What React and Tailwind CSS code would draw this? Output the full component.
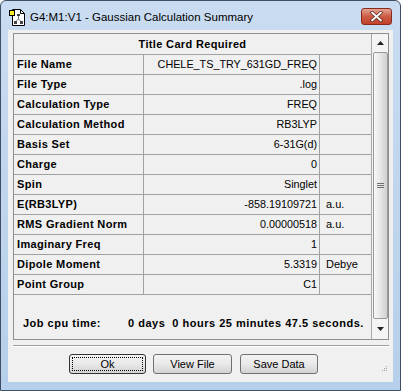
import React from "react";

const rows=[
["File Name","CHELE_TS_TRY_631GD_FREQ",""],
["File Type",".log",""],
["Calculation Type","FREQ",""],
["Calculation Method","RB3LYP",""],
["Basis Set","6-31G(d)",""],
["Charge","0",""],
["Spin","Singlet",""],
["E(RB3LYP)","-858.19109721","a.u."],
["RMS Gradient Norm","0.00000518","a.u."],
["Imaginary Freq","1",""],
["Dipole Moment","5.3319","Debye"],
["Point Group","C1",""]
];

function DocIcon(){
return(
<svg width="17" height="17" viewBox="0 0 17 17">
<path d="M3.5 0.5 H11.5 L15.5 4.5 V16.5 H3.5 Z" fill="#fff" stroke="#000"/>
<path d="M11.5 0.5 V4.5 H15.5" fill="none" stroke="#000"/>
<line x1="9.5" y1="6" x2="9.5" y2="10" stroke="#777"/>
<line x1="9.5" y1="10" x2="6.5" y2="13" stroke="#777"/>
<line x1="9.5" y1="10" x2="12.5" y2="13" stroke="#777"/>
<rect x="8" y="5" width="3" height="2" fill="#444"/>
<rect x="5" y="12" width="3" height="3" fill="#444"/>
<rect x="11" y="12" width="3" height="3" fill="#444"/>
<rect x="0.5" y="1.5" width="5" height="5" fill="#f7ec2a" stroke="#000"/>
</svg>
);
}

function Btn({label,focused,w}){
return(
<button className={"h-[20px] rounded-[3px] border bg-linear-to-b from-[#f3f3f3] via-[#e9e9e9] to-[#d3d3d3] text-[11px] text-black flex items-center justify-center p-[2px] "+w+" "+(focused?"border-[#333333]":"border-[#707070]")}>
<span className={"w-full h-full flex items-center justify-center "+(focused?"border border-dotted border-black":"")}>
{label}
</span>
</button>
);
}

export default function App(){

const bold="font-bold tracking-[0.35px]";

return(

<div className="w-[401px] h-[391px] bg-white" style={{fontFamily:"'Liberation Sans', Arial, sans-serif"}}>

<div className="w-[401px] h-[391px] flex flex-col border border-[#3f4e62] rounded-t-[6px] bg-linear-to-b from-[#c9dcf1] to-[#b6cfea]">

{/* title bar */}
<div className="h-[29px] flex items-start">

<div className="ml-[8px] mt-[8px]">
<DocIcon/>
</div>

<span className="ml-[4px] mt-[8px] text-[11.5px] text-black">
G4:M1:V1 - Gaussian Calculation Summary
</span>

<div className="ml-auto mr-[8px] mt-[7px] w-[31px] h-[17px] rounded-[3px] border border-[#8a2a1e] bg-linear-to-b from-[#e4a493] via-[#cc5b44] to-[#c2412b] flex items-center justify-center">
<svg width="13" height="11" viewBox="0 0 13 11">
<path d="M2 1.5 L11 9.5 M11 1.5 L2 9.5" stroke="#5a2a22" strokeWidth="3.4" strokeLinecap="round"/>
<path d="M2 1.5 L11 9.5 M11 1.5 L2 9.5" stroke="#fff" strokeWidth="1.8" strokeLinecap="round"/>
</svg>
</div>

</div>

{/* client */}
<div className="mx-[7px] h-[352px] bg-[#f0f0f0] flex flex-col text-black">

<div className="mt-[3px] ml-[5px] w-[376px] h-[307px] border border-[#8e8f8f] flex">

<div className="w-[357px] flex flex-col">

<div className={"h-[21px] border-b border-[#a0a0a0] flex items-center justify-center text-[11px] "+bold}>
Title Card Required
</div>

{rows.map((r)=>(

<div key={r[0]} className="h-[20px] border-b border-[#a0a0a0] flex text-[11px]">

<div className={"w-[130px] border-r border-[#a0a0a0] pl-[3px] flex items-center "+bold}>
{r[0]}
</div>

<div className="w-[176px] border-r border-[#a0a0a0] pr-[2px] flex items-center justify-end text-[10.8px]">
{r[1]}
</div>

<div className="w-[51px] pl-[6px] flex items-center">
{r[2]}
</div>

</div>

))}

<div className="flex-1 flex items-end pb-[8px] pl-[9px] text-[11px] whitespace-pre font-bold tracking-[0.5px]">
<span className="w-[105px]">Job cpu time:</span>
<span>0 days  0 hours 25 minutes 47.5 seconds.</span>
</div>

</div>

{/* scrollbar */}
<div className="w-[17px] border-l border-[#a9a9a9] bg-[#f4f4f4] flex flex-col items-center">

<div className="h-[18px] flex items-center justify-center">
<svg width="7" height="4" viewBox="0 0 7 4"><path d="M3.5 0 L7 4 H0 Z" fill="#222"/></svg>
</div>

<div className="w-[15px] h-[267px] rounded-[2px] border border-[#9a9a9a] bg-linear-to-r from-[#f7f7f7] via-[#e6e6e6] to-[#d0d0d0] flex flex-col items-center justify-center gap-[1px]">
<div className="w-[7px] h-[1px] bg-[#6f6f6f]"/>
<div className="w-[7px] h-[1px] bg-[#6f6f6f]"/>
<div className="w-[7px] h-[1px] bg-[#6f6f6f]"/>
</div>

<div className="flex-1 flex items-center justify-center">
<svg width="7" height="4" viewBox="0 0 7 4"><path d="M0 0 H7 L3.5 4 Z" fill="#222"/></svg>
</div>

</div>

</div>

<div className="mt-[5px] ml-[5px] w-[376px] h-[2px] border-t border-[#a0a0a0] border-b border-b-white"/>

<div className="mt-[7px] flex items-start">

<div className="ml-[61px] flex gap-[7px]">
<Btn label="Ok" focused w="w-[77px]"/>
<Btn label="View File" w="w-[79px]"/>
<div className="ml-[1px]">
<Btn label="Save Data" w="w-[78px]"/>
</div>
</div>

<div className="ml-auto mr-[6px] mt-[12px] grid grid-cols-3 gap-[1px]">
<div className="w-[1px] h-[1px]"/>
<div className="w-[1px] h-[1px]"/>
<div className="w-[1px] h-[1px] bg-[#a0a0a0]"/>
<div className="w-[1px] h-[1px]"/>
<div className="w-[1px] h-[1px] bg-[#a0a0a0]"/>
<div className="w-[1px] h-[1px] bg-[#a0a0a0]"/>
<div className="w-[1px] h-[1px] bg-[#a0a0a0]"/>
<div className="w-[1px] h-[1px] bg-[#a0a0a0]"/>
<div className="w-[1px] h-[1px] bg-[#a0a0a0]"/>
</div>

</div>

</div>

</div>

</div>

);

}
